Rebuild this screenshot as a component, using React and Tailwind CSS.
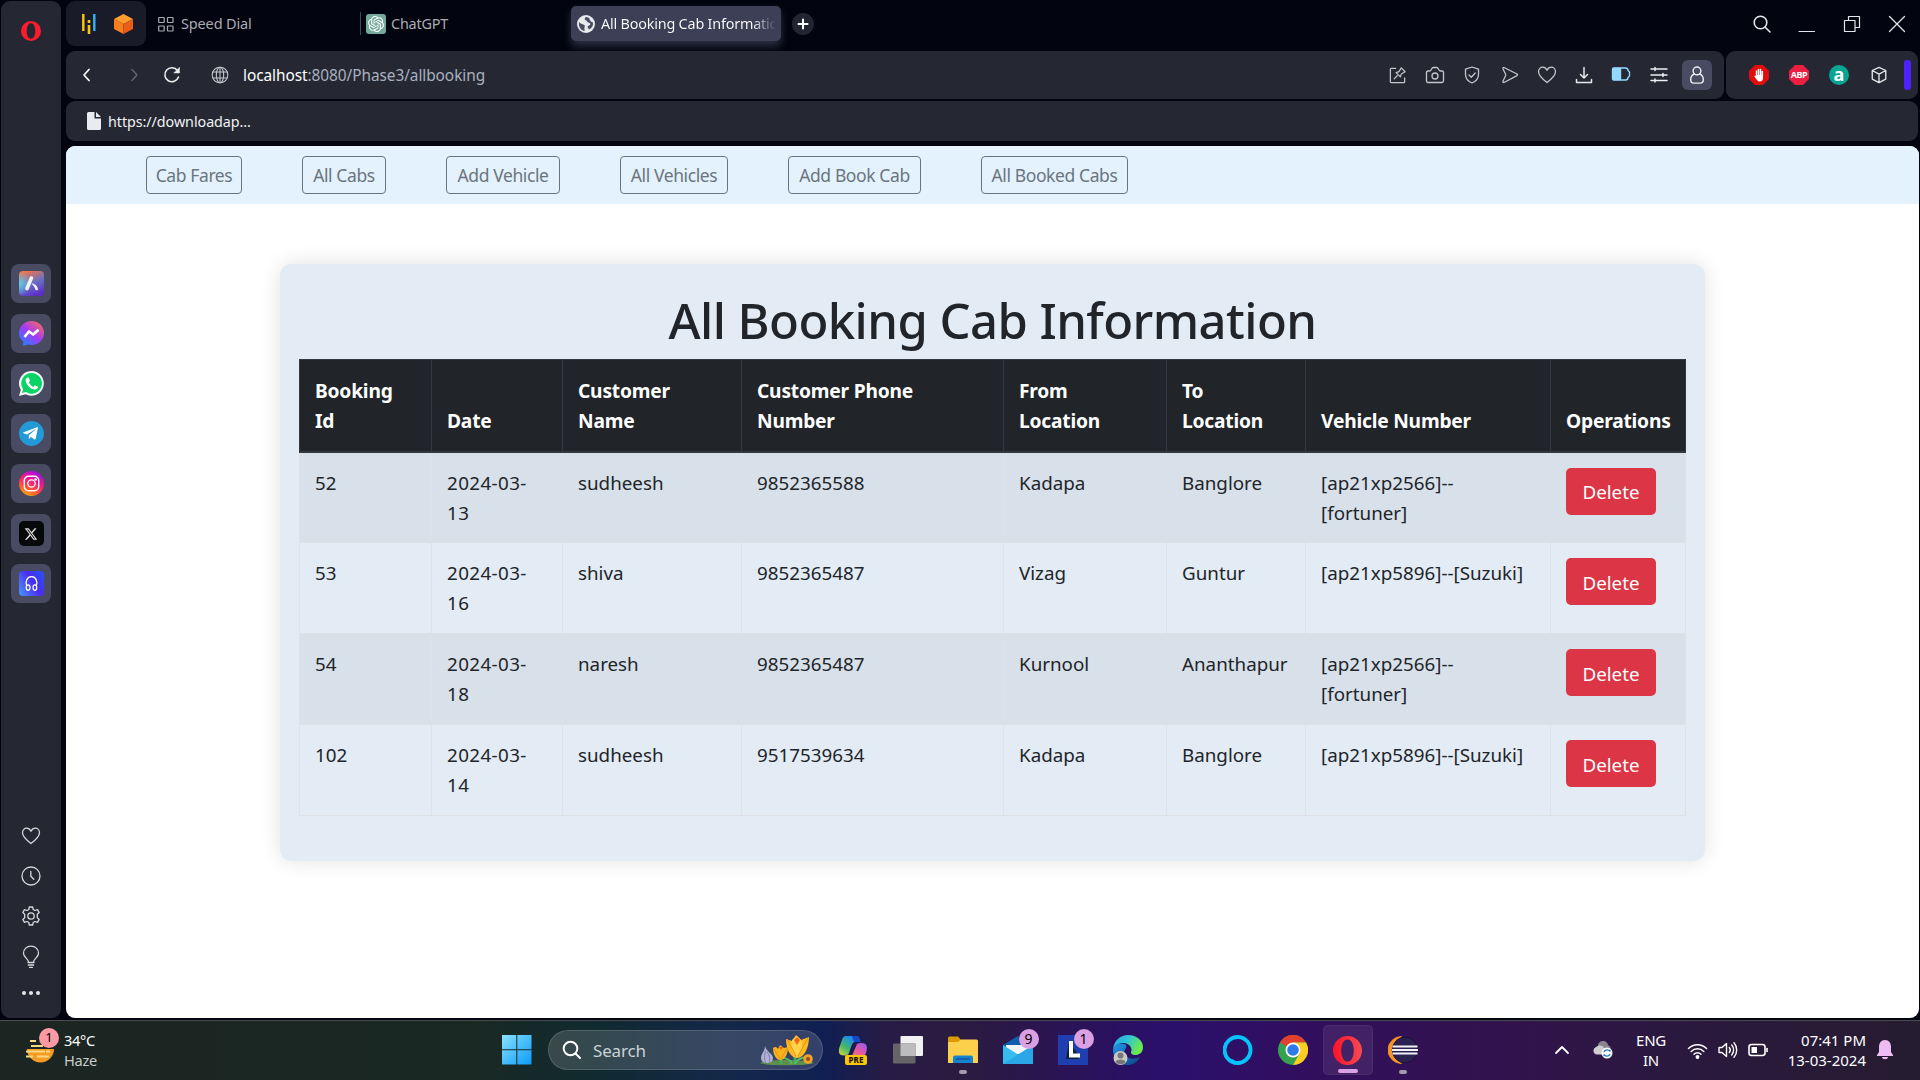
import React from "react";
import { FaTelegramPlane } from "react-icons/fa";
import { FaXTwitter } from "react-icons/fa6";
import { SiOpenai } from "react-icons/si";

const Svg = ({ size = 20, className = "", children, sw = 1.3, box = 20 }) => (
  <svg width={size} height={size} viewBox={`0 0 ${box} ${box}`} fill="none" stroke="currentColor" strokeWidth={sw} strokeLinecap="round" strokeLinejoin="round" className={`shrink-0 ${className}`}>
    {children}
  </svg>
);

const HEART = "M10 17.5 C6 14.5 1.5 11 1.5 6.8 C1.5 3.8 3.6 2.2 5.6 2.2 C7.8 2.2 9.2 3.5 10 5.2 C10.8 3.5 12.2 2.2 14.4 2.2 C16.4 2.2 18.5 3.8 18.5 6.8 C18.5 11 14 14.5 10 17.5 Z";

const OperaLogo = ({ id, w = 20, h = 20, c1 = "#ff1b2d", c2 = "#ff1b2d" }) => (
  <svg width={w} height={h} viewBox="0 0 30 30" className="shrink-0">
    <defs>
      <linearGradient id={id} x1="0" y1="0" x2="1" y2="0">
        <stop offset="0" stopColor={c1} />
        <stop offset="1" stopColor={c2} />
      </linearGradient>
    </defs>
    <path fillRule="evenodd" fill={`url(#${id})`} d="M15 0 A15 15 0 1 0 15 30 A15 15 0 1 0 15 0 Z M15 3.5 C19 3.5 21.5 8.5 21.5 15 C21.5 21.5 19 26.5 15 26.5 C11 26.5 8.5 21.5 8.5 15 C8.5 8.5 11 3.5 15 3.5 Z" />
  </svg>
);

const sideApps = [
  <svg key="aria" width="25" height="25" viewBox="0 0 25 25">
    <defs>
      <linearGradient id="ar" x1="0.3" y1="0" x2="0.7" y2="1">
        <stop offset="0" stopColor="#f0744a" />
        <stop offset="0.5" stopColor="#6a6fc4" />
        <stop offset="1" stopColor="#5a2bc8" />
      </linearGradient>
      <radialGradient id="ar2" cx="0" cy="0.5" r="0.5">
        <stop offset="0" stopColor="#5bd0ea" />
        <stop offset="1" stopColor="#5bd0ea" stopOpacity="0" />
      </radialGradient>
    </defs>
    <rect width="25" height="25" rx="4" fill="url(#ar)" />
    <rect width="25" height="25" rx="4" fill="url(#ar2)" />
    <path d="M12.4 7 L8 17.5" stroke="#f1f2f4" strokeWidth="3.6" strokeLinecap="round" />
    <path d="M12.5 12.5 C16 12.5 18.5 15 19 18 C19 19.8 16.8 19.6 16.4 18.4 C15.8 16.4 14.8 15 12.5 12.5Z" fill="#f1f2f4" />
  </svg>,
  <svg key="ms" width="25" height="25" viewBox="0 0 25 25">
    <defs>
      <linearGradient id="msg" x1="0.1" y1="1" x2="0.9" y2="0">
        <stop offset="0" stopColor="#1488ff" />
        <stop offset="0.5" stopColor="#a23bf6" />
        <stop offset="1" stopColor="#ff6a5c" />
      </linearGradient>
    </defs>
    <path fill="url(#msg)" d="M12.5 0 C19.5 0 25 5 25 12 C25 19 19.5 24 12.5 24 C11.2 24 10 23.8 9 23.5 L4.2 25 V20.6 C1.6 18.5 0 15.5 0 12 C0 5 5.5 0 12.5 0Z" />
    <path d="M5.5 16 L10 10.5 L14.2 13.5 L19.5 8.8" stroke="#fff" strokeWidth="2.7" fill="none" strokeLinejoin="round" />
  </svg>,
  <svg key="wa" width="25" height="25" viewBox="0 0 25 25">
    <path fill="#f4f6f5" d="M12.5 0 A12.4 12.4 0 1 1 6.5 23.3 L0 25 L1.8 18.7 A12.4 12.4 0 0 1 12.5 0Z" />
    <path fill="#0bd366" d="M12.6 2.1 A10.3 10.3 0 1 1 7 21 L3 22 L4.1 18.2 A10.3 10.3 0 0 1 12.6 2.1Z" />
    <path fill="#fff" d="M9 6.5 C8 6.5 6.6 7.7 6.6 9.6 C6.6 13.5 12 18.6 15.6 18.6 C17.6 18.6 19 17.2 19 15.8 L15.9 14.2 L14.4 15.9 C12.6 15.2 10.6 13.3 9.8 11.5 L10.9 10 L9.8 6.6Z" />
  </svg>,
  <div key="tg" className="flex size-[25px] items-center justify-center rounded-full bg-[#2399d6] text-white">
    <FaTelegramPlane size={17} className="-ml-0.5" />
  </div>,
  <div key="ig" className="flex size-[25px] items-center justify-center rounded-full bg-[linear-gradient(25deg,#ffc20e_5%,#ff5a2c_30%,#f0148c_60%,#a010f0_90%)] text-white">
    <Svg size={17} sw={1.6}>
      <rect x="1.5" y="1.5" width="17" height="17" rx="5" />
      <circle cx="10" cy="10" r="4.3" />
      <circle cx="14.8" cy="5.2" r="0.7" fill="currentColor" />
    </Svg>
  </div>,
  <div key="x" className="flex size-[25px] items-center justify-center rounded-[5px] bg-[#07080a] text-[#dcdcdc]">
    <FaXTwitter size={14} />
  </div>,
  <div key="hp" className="flex size-[25px] items-center justify-center rounded-[4px] bg-[linear-gradient(60deg,#4a9af8,#4a2bf0_55%,#2455f5)] text-white">
    <Svg size={17} sw={1.5}>
      <path d="M4.5 12.5 C2.5 8 4.5 2 10 2 C15.5 2 17.5 8 15.5 12.5" />
      <ellipse cx="6" cy="14.8" rx="2.2" ry="3.2" />
      <ellipse cx="14" cy="14.8" rx="2.2" ry="3.2" />
    </Svg>
  </div>,
];

function Sidebar() {
  return (
    <aside className="ml-px mt-px flex h-[1017px] w-[60px] shrink-0 flex-col items-center rounded-[9px] bg-[#252833]">
      <div className="mt-5 flex h-5 items-center">
        <OperaLogo id="opside" />
      </div>
      <div className="mt-[223px] flex flex-col gap-[11px]">
        {sideApps.map((icon, i) => (
          <div key={i} className="flex h-[39px] w-10 items-center justify-center rounded-lg bg-[#484b61]">{icon}</div>
        ))}
      </div>
      <div className="mt-auto mb-[23px] flex flex-col items-center text-[#d6d8dc]">
        <Svg sw={1.3} className="mb-5"><path d={HEART} /></Svg>
        <Svg sw={1.3} className="mb-5">
          <circle cx="10" cy="10" r="9" />
          <path d="M9.8 5.5 V10.3 L12.8 13.3" />
        </Svg>
        <Svg sw={1.3} className="mb-[19px]">
          <path d="M8.3 1 H11.7 L12.2 3.5 L14 4.5 L16.5 3.7 L18.2 6.6 L16.3 8.3 V11.7 L18.2 13.4 L16.5 16.3 L14 15.5 L12.2 16.5 L11.7 19 H8.3 L7.8 16.5 L6 15.5 L3.5 16.3 L1.8 13.4 L3.7 11.7 V8.3 L1.8 6.6 L3.5 3.7 L6 4.5 L7.8 3.5 Z" />
          <circle cx="10" cy="10" r="3.2" />
        </Svg>
        <svg width="20" height="24" viewBox="0 0 20 24" fill="none" stroke="currentColor" strokeWidth="1.3" strokeLinecap="round" className="mb-[22px]">
          <path d="M7.3 16.5 C7.3 13.8 2.5 12.5 2.5 8.2 C2.5 4 5.8 1.2 10 1.2 C14.2 1.2 17.5 4 17.5 8.2 C17.5 12.5 12.7 13.8 12.7 16.5 M7 17.5 H13 M7.3 20 H12.7 M8.5 22.3 H11.5" />
        </svg>
        <div className="flex gap-[3px]">
          <span className="size-1 rounded-full bg-[#e4e6ea]" />
          <span className="size-1 rounded-full bg-[#e4e6ea]" />
          <span className="size-1 rounded-full bg-[#e4e6ea]" />
        </div>
      </div>
    </aside>
  );
}

function TabStrip() {
  return (
    <div className="flex h-[51px] items-start">
      <div className="mt-px flex h-[45px] w-20 items-center rounded-[9px] bg-[#191c28] pl-4">
        <svg width="14" height="20" viewBox="0 0 14 20" className="shrink-0">
          <path d="M1.3 0 V17" stroke="#ffc60a" strokeWidth="2.4" />
          <path d="M7 6 V9 M7 11 V20" stroke="#ffc60a" strokeWidth="2.6" />
          <path d="M12.3 0 V17" stroke="#35b1f5" strokeWidth="2.4" />
        </svg>
        <svg width="19" height="20" viewBox="0 0 19 20" className="ml-[18px] shrink-0">
          <path d="M9.5 0 L19 5 L9.5 10 L0 5Z" fill="#ff9d2e" />
          <path d="M0 5 L9.5 10 V20 L0 15Z" fill="#fb7d1c" />
          <path d="M19 5 L9.5 10 V20 L19 15Z" fill="#ea5d17" />
        </svg>
      </div>
      <div className="flex h-[47px] w-[214px] items-center pl-3 text-[#a9abb3]">
        <Svg size={16} box={16} sw={1.2}>
          <rect x="0.7" y="1.5" width="5.5" height="5" rx="0.5" />
          <rect x="9.5" y="1.5" width="5.5" height="5" rx="0.5" />
          <rect x="0.7" y="10" width="5.5" height="5" rx="0.5" />
          <rect x="9.5" y="10" width="5.5" height="5" rx="0.5" />
        </Svg>
        <span className="ml-[7px] text-[14.5px] tracking-[-0.15px]">Speed Dial</span>
      </div>
      <div className="mt-3 h-[23px] w-px bg-[#454856]" />
      <div className="flex h-[47px] w-[210px] items-center pl-[5px] text-[#a9abb3]">
        <div className="flex size-5 items-center justify-center rounded-[3px] bg-[#74a99b] text-white">
          <SiOpenai size={16} />
        </div>
        <span className="ml-[5px] text-[14.4px] tracking-[-0.2px]">ChatGPT</span>
      </div>
      <div className="mt-[6px] flex h-[35px] w-[210px] items-center overflow-hidden rounded-[5px] bg-[#3c3f56] shadow-[0_5px_9px_rgba(90,94,120,0.5)]">
        <svg width="18" height="18" viewBox="0 0 18 18" className="ml-1.5 shrink-0">
          <circle cx="9" cy="9" r="9" fill="#e8eaed" />
          <path d="M2 7 C3.5 9 6 9 7.5 10 C8.5 11 6.5 13 8 15.5 L6.5 15.8 C3 14.5 1.5 11 2 7Z M9 2 C7 3 7.5 5 9.5 5.5 C10 8 13 7 13.5 9 C13 10.5 11 10.5 10.5 12 L12 14.5 C15 13 16.5 10.5 16 7.5 C14 7 12.5 5.5 12.5 3.5 C11.5 2.5 10 2 9 2Z" fill="#4a4d62" />
        </svg>
        <span className="ml-[6px] w-[175px] shrink-0 overflow-hidden whitespace-nowrap bg-[linear-gradient(90deg,#fff_86%,transparent)] bg-clip-text text-[14.4px] tracking-[-0.2px] text-transparent">All Booking Cab Information</span>
      </div>
      <div className="ml-[11px] mt-[13px] flex size-[22px] items-center justify-center rounded-full bg-[#22252f] text-white">
        <Svg size={12} box={12} sw={2}><path d="M6 1.5 V10.5 M1.5 6 H10.5" /></Svg>
      </div>
      <div className="ml-auto mr-[13px] flex h-[48px] items-center gap-[27px] text-[#e4e5e8]">
        <Svg size={18} box={18} sw={1.6}><circle cx="7.5" cy="7.5" r="6.3" /><path d="M12 12 L17 17" /></Svg>
        <Svg size={18} box={18} sw={1.2}><path d="M1 16.5 H16.5" /></Svg>
        <Svg size={18} box={18} sw={1.2}><path d="M1.5 5.5 H12 V16.5 H1.5 Z M5.5 5.5 V1.5 H16.5 V12.5 H12" /></Svg>
        <Svg size={18} box={18} sw={1.3}><path d="M1.5 1.5 L16.5 16.5 M16.5 1.5 L1.5 16.5" /></Svg>
      </div>
    </div>
  );
}

function Toolbar() {
  return (
    <div className="flex h-12 gap-0.5">
      <div className="flex w-[1658px] items-center rounded-[9px] bg-[#252833] text-[#c4c6cc]">
        <Svg size={16} box={16} sw={1.7} className="ml-[13px] text-white"><path d="M10 2.5 L5 8 L10 13.5" /></Svg>
        <Svg size={16} box={16} sw={1.3} className="ml-[31px] text-[#666974]"><path d="M6 2.5 L11 8 L6 13.5" /></Svg>
        <Svg size={18} box={18} sw={1.6} className="ml-[21px] text-[#eceded]"><path d="M15.5 11 A7 7 0 1 1 14.5 4.5" /><path d="M16.5 1.5 V7 H11Z" fill="currentColor" strokeWidth="0.5" /></Svg>
        <Svg size={18} box={18} sw={1.1} className="ml-[30px]">
          <circle cx="9" cy="9" r="7.8" /><ellipse cx="9" cy="9" rx="3.7" ry="7.8" /><path d="M9 1.2 V16.8 M1.8 6 H16.2 M1.8 12 H16.2" />
        </Svg>
        <span className="mt-px ml-[14px] text-[15.4px] tracking-[-0.06px] text-[#a9b0bf]"><span className="text-white">localhost</span>:8080/Phase3/allbooking</span>
        <div className="ml-auto mr-[12px] flex items-center gap-[17.3px]">
          <Svg size={19} sw={1.3} className="mx-[0.5px]"><path d="M8 2.5 H3.5 Q2.5 2.5 2.5 3.5 V16.5 Q2.5 17.5 3.5 17.5 H16.5 Q17.5 17.5 17.5 16.5 V12.5 M6.5 13.5 L9.7 10.3 M8.5 7 L13 11.5 L14 8.5 L18 6 L14 2 L11.5 6 Z" /></Svg>
          <Svg sw={1.3}><path d="M3 6 H4.5 Q5.5 6 6 5 L6.5 4 Q7.2 2.5 8.5 2.5 H11.5 Q12.8 2.5 13.5 4 L14 5 Q14.5 6 15.5 6 H17 Q18.5 6 18.5 7.5 V15.5 Q18.5 17.5 17 17.5 H3 Q1.5 17.5 1.5 15.5 V7.5 Q1.5 6 3 6Z" /><circle cx="10" cy="11" r="3" /></Svg>
          <Svg sw={1.3}><path d="M10 2 L16.5 4.2 V9.5 C16.5 14 13.5 16.5 10 18 C6.5 16.5 3.5 14 3.5 9.5 V4.2Z M7 10 L9.3 12.3 L13.2 8" /></Svg>
          <Svg sw={1.3}><path d="M4 2.5 L17 9 Q18 9.8 17 10.6 L4 17.5 Q2.5 17.5 3 16 L5.5 11 Q6 10 5.5 9 L3 4 Q2.5 2.5 4 2.5 Z" /></Svg>
          <Svg sw={1.3}><path d={HEART} /></Svg>
          <Svg sw={1.5} className="text-[#e8e9ec]"><path d="M10 2.5 V12.5 M6.5 9.5 L10 13 L13.5 9.5 M2.5 14.5 V17.5 H17.5 V14.5" /></Svg>
          <Svg sw={1.4} className="text-[#92d8ff]"><path d="M3 3 H14.5 Q17 3.3 17 5.5 L18.5 7 V11 L17 12.5 Q17 15 14.5 15 H3 Q1.5 15 1.5 13.5 V4.5 Q1.5 3 3 3Z" /><path d="M2 3.5 H9.5 V14.5 H2Z" fill="currentColor" /></Svg>
          <Svg sw={1.5} className="text-[#eceef1]"><path d="M2 4 H18 M2 10 H18 M2 15.5 H18 M6 2.5 V5.5 M14 8.5 V11.5 M6 14 V17" /></Svg>
          <div className="-ml-1 flex size-[30px] items-center justify-center rounded-[6px] bg-[#484b61] text-[#eceef1]">
            <Svg size={18} sw={1.6}><circle cx="10" cy="5.5" r="4.3" /><path d="M7 8.8 C4.5 10 3 12.5 3 15 C3 18 4.5 19 6.5 19 H13.5 C15.5 19 17 18 17 15 C17 12.5 15.5 10 13 8.8" /></Svg>
          </div>
        </div>
      </div>
      <div className="flex w-[192px] items-center rounded-[9px] bg-[#252833] pl-[23px]">
        <svg width="20" height="20" viewBox="0 0 20 20" className="shrink-0">
          <path d="M6 0 H14 L20 6 V14 L14 20 H6 L0 14 V6Z" fill="#e40d0d" />
          <path d="M7.5 6 V12 M9.5 4.5 V12 M11.5 4.5 V12 M13.3 6.5 V13" stroke="#fff" strokeWidth="1.5" strokeLinecap="round" />
          <path d="M6.8 10 H14 V12.5 Q14 16.5 10.8 16.5 Q9 16.5 8 15 L5.3 11.5 Q5.8 10.3 7 11.3Z" fill="#fff" />
        </svg>
        <div className="ml-5 flex size-5 items-center justify-center bg-[#ec1e42] text-[9px] font-bold tracking-[-0.4px] text-white [clip-path:polygon(30%_0,70%_0,100%_30%,100%_70%,70%_100%,30%_100%,0_70%,0_30%)]">ABP</div>
        <div className="ml-5 flex size-5 items-center justify-center rounded-full bg-[#08a592] pb-[3px] text-[18px] leading-none font-bold text-white">a</div>
        <Svg size={18} sw={1.5} className="ml-[21px] text-[#e4e5e8]"><path d="M10 1.5 L17.5 5 V14.5 L10 18.5 L2.5 14.5 V5 Z M2.5 5 L10 9 L17.5 5 M10 9 V18.5" /></Svg>
        <div className="ml-4 h-[30px] w-[7px] rounded-[3px] bg-[#4d22ff]" />
      </div>
    </div>
  );
}

const navItems = [
  ["Cab Fares", "w-24"],
  ["All Cabs", "w-[84px]"],
  ["Add Vehicle", "w-[114px]"],
  ["All Vehicles", "w-[108px]"],
  ["Add Book Cab", "w-[133px]"],
  ["All Booked Cabs", "w-[147px]"],
];

const columns = [
  [["Booking", "Id"], "w-[132px]"],
  [["Date"], "w-[131px]"],
  [["Customer", "Name"], "w-[179px]"],
  [["Customer Phone", "Number"], "w-[262px]"],
  [["From", "Location"], "w-[163px]"],
  [["To", "Location"], "w-[139px]"],
  [["Vehicle Number"], "w-[245px]"],
  [["Operations"], "w-[135px]"],
];

const bookings = [
  [["52"], ["2024-03-", "13"], ["sudheesh"], ["9852365588"], ["Kadapa"], ["Banglore"], ["[ap21xp2566]--", "[fortuner]"]],
  [["53"], ["2024-03-", "16"], ["shiva"], ["9852365487"], ["Vizag"], ["Guntur"], ["[ap21xp5896]--[Suzuki]"]],
  [["54"], ["2024-03-", "18"], ["naresh"], ["9852365487"], ["Kurnool"], ["Ananthapur"], ["[ap21xp2566]--", "[fortuner]"]],
  [["102"], ["2024-03-", "14"], ["sudheesh"], ["9517539634"], ["Kadapa"], ["Banglore"], ["[ap21xp5896]--[Suzuki]"]],
];

const Lines = ({ of }) => of.map((line) => <div key={line} className="whitespace-nowrap">{line}</div>);

function Page() {
  return (
    <main className="mt-[5px] h-[872px] overflow-hidden rounded-[9px] bg-white text-[#212529]">
      <nav className="flex h-[58px] items-center gap-[60px] bg-[#e3f2fd] pl-20">
        {navItems.map(([label, w]) => (
          <button key={label} className={`${w} h-[38px] rounded-[4px] border border-[#6c757d] pt-0.5 text-[17.5px] leading-none tracking-[-0.4px] whitespace-nowrap text-[#6c757d]`}>{label}</button>
        ))}
      </nav>
      <section className="ml-[214px] mt-[60px] h-[597px] w-[1425px] rounded-xl bg-[#e3ebf5] px-[19px] pt-[25px] shadow-[0_0_20px_rgba(0,0,0,0.12)]">
        <h1 className="h-[70px] text-center text-[49px] leading-[63px] font-[550] tracking-[-0.57px]">All Booking Cab Information</h1>
        <table className="w-[1386px] table-fixed border-collapse text-[18.8px] leading-[30px]">
          <thead>
            <tr className="h-[92px] bg-[#212529] text-left align-bottom text-white">
              {columns.map(([label, w]) => (
                <th key={label.join()} className={`${w} border border-b-2 border-[#32383e] pt-[15px] pb-[15px] pl-[15px] text-[19.2px] font-bold tracking-[-0.2px]`}><Lines of={label} /></th>
              ))}
            </tr>
          </thead>
          <tbody>
            {bookings.map((row) => (
              <tr key={row[0]} className="h-[91px] align-top odd:bg-[#d8e0e9]">
                {row.map((cell, i) => (
                  <td key={i} className={`border border-[#dee2e6] pt-[15px] pl-[15px] ${i === 1 ? "tracking-[0.4px]" : ""}`}><Lines of={cell} /></td>
                ))}
                <td className="border border-[#dee2e6] pt-[15px] pl-[15px]">
                  <button className="block h-[47px] w-[90px] rounded-[5px] bg-[#dc3545] pt-0.5 text-white">Delete</button>
                </td>
              </tr>
            ))}
          </tbody>
        </table>
      </section>
    </main>
  );
}

const Slot = ({ children, active, dot }) => (
  <div className="flex h-[60px] w-[55px] shrink-0 items-center justify-center">
    <div className={`relative flex size-[50px] items-center justify-center rounded-[5px] ${active ? "border border-white/5 bg-white/[0.08]" : ""}`}>
      {children}
      {dot && <span className={`absolute bottom-px h-1 rounded-full ${active ? "w-5 bg-[#dba0e4]" : "w-2 bg-[#a199ad]"}`} />}
    </div>
  </div>
);

const Badge = ({ children }) => (
  <span className="absolute top-1 right-1 flex size-5 items-center justify-center rounded-full bg-[#dba0e4] text-[14px] leading-none text-black">{children}</span>
);

function Taskbar() {
  return (
    <footer className="flex h-[60px] w-full items-center border-t border-[#4a4c52] bg-[linear-gradient(90deg,#1c2522_0%,#1a2924_25%,#102a30_31%,#14284a_38%,#101f52_43%,#271c46_46%,#2b1b3f_50%,#2a1160_58%,#2b106c_61%,#320f5c_69%,#33124f_77%,#2b1840_86%,#251c30_100%)] pb-px text-white">
      <div className="relative ml-[25px] h-[25px] w-[30px] shrink-0">
        <svg width="30" height="25" viewBox="0 0 30 25">
          <path d="M2 11 H29 A13.5 13.5 0 0 1 2 11Z" fill="#f59a23" />
          <path d="M5 3 H11 M6 8 H18 M1 13.5 H20 M21 13.5 H25 M1 18.5 H8 M12 18.5 H24" stroke="#f7d983" strokeWidth="2" />
        </svg>
        <span className="absolute -top-[10px] left-[14px] flex size-5 items-center justify-center rounded-full bg-[#ff99a4] text-[13px] leading-none text-black">1</span>
      </div>
      <div className="ml-[9px] w-[438px] shrink-0 text-[14.6px] leading-5 tracking-[-0.3px]">
        <div>34°C</div>
        <div className="text-[#c9cccb]">Haze</div>
      </div>
      <svg width="30" height="30" viewBox="0 0 30 30" className="shrink-0">
        <defs><linearGradient id="wn" x1="0" y1="0" x2="1" y2="1"><stop offset="0" stopColor="#8ae2ff" /><stop offset="1" stopColor="#0a9bf5" /></linearGradient></defs>
        <path d="M0 0 H14.3 V14.3 H0Z M15.3 0 H29.5 V14.3 H15.3Z M0 15.3 H14.3 V29.5 H0Z M15.3 15.3 H29.5 V29.5 H15.3Z" fill="url(#wn)" />
      </svg>
      <div className="ml-4 flex h-10 w-[275px] shrink-0 items-center rounded-full border border-white/15 bg-white/15 pl-[13px]">
        <Svg size={20} sw={2} className="text-white"><circle cx="8.5" cy="8.5" r="6.8" /><path d="M13.5 13.5 L18 18" /></Svg>
        <span className="mt-px ml-[11px] text-[17px] tracking-[-0.15px] text-[#ccd1d6]">Search</span>
        <svg width="56" height="32" viewBox="0 0 56 32" className="ml-auto mr-[7px]">
          <path d="M1 29 C10 25 46 25 55 29 C50 32 6 32 1 29Z" fill="#5f8f4d" />
          <path d="M22 30 V22 M36 30 V20" stroke="#3fae5a" strokeWidth="3" />
          <path d="M33 30 C32 26 27 24 24 24 M36 30 C37 25 43 24 46 23" stroke="#55b86a" strokeWidth="2" fill="none" />
          <path d="M6 12 C7 17 14 20 14 24 C14 28 11 29 8 29 C4 29 2 27 2 24 C2 20 6 17 6 12Z" fill="#aeb0d4" />
          <path d="M7 17 C5 21 5 26 7 29 M8 18 C11 21 11 26 10 29" stroke="#7d7fb4" fill="none" />
          <path d="M14 14 C16 12 18 13 19 15 L21 11 L25 14 L29 13 C29 20 26 26 21 26 C17 26 14 20 14 14Z" fill="#f8b31c" />
          <path d="M27 5 L33 7 L37 1 L42 6 L50 3 C50 14 45 24 38 24 C31 24 27 14 27 5Z" fill="#fcb81e" />
          <path d="M33 6 C31 12 33 20 38 23 C43 18 44 12 42 6 L38 2Z" fill="#ffd24a" />
          <path d="M28 5 L37 22 M49 4 L39 22 M15 15 L21 25 M28 14 L22 25" stroke="#e8920f" strokeWidth="1" />
          <path d="M35 6 L38 11 L41 6 L38 3Z M20 13 L22 16 L24 13Z" fill="#f2660f" />
          <circle cx="49" cy="25" r="4.8" fill="#eda22b" /><circle cx="49" cy="25" r="2" fill="#9a4a12" />
        </svg>
      </div>
      <div className="ml-[2px] flex shrink-0">
        <Slot>
          <svg width="30" height="30" viewBox="0 0 30 30">
            <defs>
              <linearGradient id="cp1" x1="0" y1="1" x2="0.8" y2="0"><stop offset="0" stopColor="#e9d43a" /><stop offset="0.4" stopColor="#42b86a" /><stop offset="0.8" stopColor="#1e8fe8" /></linearGradient>
              <linearGradient id="cp2" x1="0" y1="1" x2="1" y2="0"><stop offset="0" stopColor="#fa7a55" /><stop offset="0.5" stopColor="#e457a8" /><stop offset="1" stopColor="#8c5cf5" /></linearGradient>
            </defs>
            <path d="M8 1 H18 C21 1 21.5 4 22.5 7 H17 C15 7 14 9 13 12 L11 18 C10 20 9 20.5 6 20.5 C1 20.5 0 17 1.5 12 L4 5 C5 2 6 1 8 1Z" fill="url(#cp1)" />
            <path d="M14 1 H18 C21 1 21.5 4 22.5 7 H17 C16 7 15 5 14 1Z" fill="#1747c9" />
            <path d="M19 9 C20 8 21 8 24 8 C29 8 29.5 12 28.5 16 C27.5 20 26 22 22 22 H12 C14 21 15 19 16 16Z" fill="url(#cp2)" />
            <rect x="7" y="20" width="22" height="10" rx="2" fill="#fcc70a" />
            <text x="18" y="28" textAnchor="middle" fontSize="8" fontWeight="800" fill="#1b1400">PRE</text>
          </svg>
        </Slot>
        <Slot>
          <svg width="30" height="28" viewBox="0 0 30 28">
            <rect x="7.5" y="0" width="22.5" height="20" rx="1" fill="#f1f1f2" />
            <rect x="0" y="7.5" width="22.5" height="20" rx="1" fill="#666469" />
            <rect x="7.5" y="7.5" width="15" height="12.5" fill="#bcbcbe" />
          </svg>
        </Slot>
        <Slot dot>
          <svg width="30" height="28" viewBox="0 0 30 28">
            <path d="M0 2 Q0 0.5 1.5 0.5 H10 L13 4 H28 V12 H0Z" fill="#dc9a05" />
            <path d="M0 6 H10 L13 3.5 H28.5 Q30 3.5 30 5 V27 H0Z" fill="#fdd04c" />
            <path d="M5 27 V21.5 Q5 19.5 7 19.5 H23 Q25 19.5 25 21.5 V27Z" fill="#1583d0" /><path d="M8 23 H22" stroke="#0b4f91" strokeWidth="1.2" />
          </svg>
        </Slot>
        <Slot>
          <svg width="30" height="28" viewBox="0 0 30 28">
            <path d="M0 9 L15 0 L30 9 V16 H0Z" fill="#0f5fae" /><path d="M3 9 H27 V18 H3Z" fill="#f2f4f7" />
            <path d="M0 9 L15 18.5 L30 9 V28 H0Z" fill="#35bdf2" /><path d="M0 28 L30 9.5 V28Z" fill="#2197df" opacity="0.6" />
          </svg>
          <Badge>9</Badge>
        </Slot>
        <Slot>
          <svg width="30" height="30" viewBox="0 0 30 30">
            <rect width="30" height="30" fill="#1f3fb1" /><path d="M11 7 L8 24 H20 L22 22Z" fill="#0d2433" />
            <path d="M13 6 V20.5 H22" stroke="#fff" strokeWidth="4" fill="none" />
          </svg>
          <Badge>1</Badge>
        </Slot>
        <Slot>
          <svg width="30" height="30" viewBox="0 0 30 30">
            <defs>
              <linearGradient id="ed1" x1="0" y1="0" x2="1" y2="0.4"><stop offset="0" stopColor="#22a5e6" /><stop offset="0.5" stopColor="#2fc3d6" /><stop offset="1" stopColor="#6bea4d" /></linearGradient>
              <linearGradient id="ed2" x1="0" y1="0" x2="1" y2="1"><stop offset="0" stopColor="#1f9ae8" /><stop offset="1" stopColor="#103f86" /></linearGradient>
            </defs>
            <path d="M0 15 C1 9 6 8 11 9 C16 10 12 14 11 17 C11 22 18 26 27 22 C24 28 19 30 15 30 C6 30 0 24 0 15Z" fill="url(#ed2)" />
            <path d="M0 14 C1 5 8 0 15 0 C24 0 30 6 30 12 C30 18 26 20 22 20 C19 20 17.5 18.5 18 17 C20 14 17 8 10 8 C5 8 1 11 0 14Z" fill="url(#ed1)" />
            <circle cx="7.5" cy="23" r="7" fill="#c9c8c6" /><circle cx="7.5" cy="20.5" r="3" fill="#777" /><path d="M2.5 27 C3 23.5 12 23.5 12.5 27 C10 30 5 30 2.5 27Z" fill="#777" />
          </svg>
        </Slot>
        <Slot />
        <Slot>
          <svg width="30" height="30" viewBox="0 0 30 30">
            <path d="M15 2 A13 13 0 1 1 13 27.9 A13 13 0 0 1 15 2Z" fill="none" stroke="#05c3fb" strokeWidth="3.8" />
            <path d="M12.5 29.8 V27.5 Q12.5 25.5 9 24 L6 24 L10 29.2Z M12.5 29.8 C19 27 25 22 26 16 L29 16 C28 25 20 30.5 12.5 29.8Z" fill="#05c3fb" />
          </svg>
        </Slot>
        <Slot>
          <svg width="30" height="30" viewBox="0 0 30 30">
            <circle cx="15" cy="15" r="15" fill="#34a251" />
            <path d="M15 15 L2 7.5 A15 15 0 0 1 28 7.5 H15Z" fill="#e43e2f" />
            <path d="M15 7.5 H28 A15 15 0 0 1 15 30 L21.5 18.7Z" fill="#fdcd1f" />
            <circle cx="15" cy="15" r="7.5" fill="#fff" /><circle cx="15" cy="15" r="5.8" fill="#3079ea" />
          </svg>
        </Slot>
        <Slot active dot><OperaLogo id="optask" w={29} h={29} c1="#fb1226" c2="#f64a52" /></Slot>
        <Slot dot>
          <svg width="30" height="28" viewBox="0 0 30 28">
            <path d="M13.5 0.5 A13.5 13.5 0 0 0 13.5 27.5 A15.5 15.5 0 0 1 13.5 0.5Z" fill="#f79423" stroke="#f79423" strokeWidth="0.8" />
            <circle cx="17" cy="14" r="12.8" fill="#2b2153" stroke="#17102e" strokeWidth="0.8" />
            <path d="M4.5 10.5 H29.5 M4 14 H30 M4.5 17.5 H29.5" stroke="#f3f2f7" strokeWidth="2" />
          </svg>
        </Slot>
      </div>
      <div className="ml-auto mr-[27px] flex shrink-0 items-center text-[15px] leading-5">
        <Svg size={16} box={16} sw={1.8}><path d="M2 11 L8 5 L14 11" /></Svg>
        <svg width="21" height="18" viewBox="0 0 21 18" className="ml-[22px]">
          <path d="M6 5 A5 4.5 0 0 1 16 4 A4 4 0 0 1 17 11 H8Z" fill="#8b858f" /><path d="M4 13.5 A4 4 0 0 1 4 6 A5 5 0 0 1 12 7 L13 13.5Z" fill="#cfcdd2" />
          <circle cx="15" cy="12" r="5.5" fill="#fff" /><path d="M12 11 A3.3 3.3 0 0 1 18 10.5 V8.8 M18 13 A3.3 3.3 0 0 1 12 13.5 V15.2" stroke="#1873c4" strokeWidth="1.3" fill="none" />
        </svg>
        <div className="ml-[23px] w-[30px] text-center tracking-[-0.3px]">ENG<br />IN</div>
        <Svg size={21} box={21} sw={1.5} className="ml-[21px]">
          <path d="M1.5 8.5 A12.5 12.5 0 0 1 19.5 8.5 M4.2 11.5 A8.8 8.8 0 0 1 16.8 11.5 M7 14.3 A5 5 0 0 1 14 14.3" /><circle cx="10.5" cy="17" r="1.2" fill="currentColor" />
        </Svg>
        <Svg size={20} sw={1.4} className="ml-[10px]">
          <path d="M1 7.5 H4 L8.5 3.5 V16.5 L4 12.5 H1Z M11.3 7.5 A4 4 0 0 1 11.3 12.5 M13.7 5 A7.5 7.5 0 0 1 13.7 15 M16 2.8 A11 11 0 0 1 16 17.2" />
        </Svg>
        <Svg size={20} sw={1.6} className="ml-[10px]"><rect x="1" y="4.5" width="16" height="11" rx="2.5" /><path d="M3.5 7 H9 V13 H3.5Z" fill="currentColor" stroke="none" /><path d="M19 8.5 V11.5" /></Svg>
        <div className="ml-[18px] w-20 text-right tracking-[0px] whitespace-nowrap">07:41 PM<br />13-03-2024</div>
        <svg width="16" height="20" viewBox="0 0 16 20" className="ml-[11px]">
          <path d="M8 0 C12 0 14 3 14 7 V12 L16 15 V16 H0 V15 L2 12 V7 C2 3 4 0 8 0Z M5 17 H11 C11 20 5 20 5 17Z" fill="#eebcf2" />
        </svg>
      </div>
    </footer>
  );
}

export default function App() {
  return (
    <div className="flex h-[1080px] w-[1920px] flex-col overflow-hidden bg-[#02040f] font-['Noto_Sans','Open_Sans',sans-serif]">
      <div className="flex h-[1020px]">
        <Sidebar />
        <div className="ml-[5px] flex w-[1853px] flex-col">
          <TabStrip />
          <Toolbar />
          <div className="mt-0.5 mr-px flex h-10 items-center rounded-[9px] bg-[#252833] pl-[21px] text-[#f1f2f4]">
            <svg width="14" height="18" viewBox="0 0 14 18"><path d="M0 1.5 Q0 0 1.5 0 H7.5 V6.5 H14 V16.5 Q14 18 12.5 18 H1.5 Q0 18 0 16.5Z M9 0 L14 5 H9Z" fill="#e9ebf0" /></svg>
            <span className="mt-px ml-[7px] text-[14.3px] tracking-[-0.05px]">https://downloadap...</span>
          </div>
          <Page />
        </div>
      </div>
      <Taskbar />
    </div>
  );
}
